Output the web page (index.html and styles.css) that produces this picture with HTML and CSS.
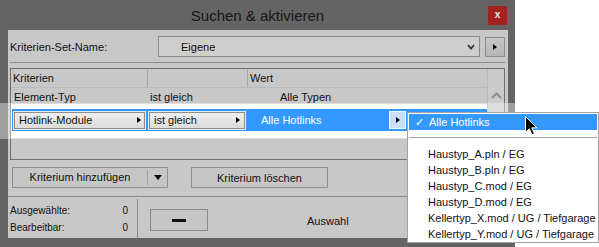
FILE: index.html
```html
<!DOCTYPE html>
<html lang="de">
<head>
	<meta charset="utf-8">
	<title>Suchen &amp; aktivieren</title>
	<link rel="stylesheet" href="styles.css">
</head>
<body>
<div class="window">
	<div class="titlebar">
		<span></span>
		<span class="title">Suchen &amp; aktivieren</span>
		<span class="close">x</span>
	</div>
	<div class="panel">
		<div class="set-row">
			<span class="set-label">Kriterien-Set-Name:</span>
			<div class="select">
				<span>Eigene</span>
				<svg width="8" height="6" viewBox="0 0 8 6"><polyline points="1,1 4,4.5 7,1" fill="none" stroke="#333" stroke-width="1.8"/></svg>
			</div>
			<div class="arrow-btn"><i class="tri-right"></i></div>
		</div>
		<div class="rule"></div>
		<div class="table">
			<div class="table-main">
				<div class="thead">
					<span class="col1">Kriterien</span>
					<span class="col2"></span>
					<span class="col3">Wert</span>
				</div>
				<div class="trow">
					<span class="col1">Element-Typ</span>
					<span class="col2">ist gleich</span>
					<span class="col3 value">Alle Typen</span>
				</div>
				<div class="edit-row">
					<div class="edit-sel">
						<div class="combo combo-type">Hotlink-Module<i class="tri-right"></i></div>
						<div class="combo combo-op">ist gleich<i class="tri-right"></i></div>
						<span class="edit-value">Alle Hotlinks</span>
						<div class="mini-btn"><i class="tri-right"></i></div>
					</div>
				</div>
			</div>
			<div class="scroll">
				<svg width="11" height="7" viewBox="0 0 11 7"><polyline points="1,6 5.5,1.5 10,6" fill="none" stroke="#8c8c8c" stroke-width="2"/></svg>
			</div>
		</div>
		<div class="buttons">
			<div class="btn split">
				<span class="split-main">Kriterium hinzufügen</span>
				<span class="split-drop"><i class="tri-down"></i></span>
			</div>
			<div class="btn delete">Kriterium löschen</div>
		</div>
		<div class="rule full"></div>
		<div class="footer">
			<div class="stats">
				<div class="stat"><span>Ausgewählte:</span><span>0</span></div>
				<div class="stat"><span>Bearbeitbar:</span><span>0</span></div>
			</div>
			<div class="btn minus"><i></i></div>
			<span class="selection">Auswahl</span>
		</div>
	</div>
</div>

<div class="band"></div>

<div class="menu">
	<div class="menu-item active"><span class="check">✓</span>Alle Hotlinks</div>
	<div class="menu-sep"></div>
	<div class="menu-item">Haustyp_A.pln / EG</div>
	<div class="menu-item">Haustyp_B.pln / EG</div>
	<div class="menu-item">Haustyp_C.mod / EG</div>
	<div class="menu-item">Haustyp_D.mod / EG</div>
	<div class="menu-item">Kellertyp_X.mod / UG / Tiefgarage</div>
	<div class="menu-item">Kellertyp_Y.mod / UG / Tiefgarage</div>
</div>

<svg class="cursor" width="13" height="20" viewBox="0 0 13 20">
	<path d="M0.5,0.5 L0.5,16.5 L4.3,12.8 L7,18.8 L9.4,17.8 L6.8,11.8 L11.8,11.8 Z" fill="#000" stroke="#fff" stroke-width="1"/>
</svg>
</body>
</html>
```

FILE: styles.css
```css
body {
	margin: 0;
	background: #fff;
	font-family: "Liberation Sans", Arial, sans-serif;
	font-size: 11px;
	color: #111;
}

.window {
	width: 515px;
	height: 247px;
	background: #646464;
	display: flex;
	flex-direction: column;
}

.titlebar {
	height: 30px;
	display: grid;
	grid-template-columns: 1fr auto 1fr;
	align-items: start;
}

.title {
	font-size: 15px;
	line-height: 17px;
	padding-top: 7px;
	color: #161616;
}

.close {
	justify-self: end;
	width: 19px;
	height: 19px;
	margin: 6px 8px 0 0;
	background: #a3201f;
	color: #e8e8e8;
	font-size: 10px;
	font-weight: bold;
	line-height: 17px;
	text-align: center;
}

.panel {
	height: 208px;
	margin: 0 7px 9px 8px;
	padding: 6px 3px 0 2px;
	background: #c8c8c8;
	box-sizing: border-box;
}

.set-row {
	display: flex;
	align-items: center;
	height: 21px;
}

.set-label {
	width: 148px;
}

.select {
	width: 322px;
	height: 21px;
	box-sizing: border-box;
	border: 1px solid #8a8a8a;
	background: #cecece;
	display: flex;
	align-items: center;
	justify-content: space-between;
	padding: 0 4px 0 22px;
}

.arrow-btn {
	width: 20px;
	height: 20px;
	margin-left: 5px;
	box-sizing: border-box;
	border: 1px solid #8c8c8c;
	background: linear-gradient(#c6c6c6, #b6b6b6);
	display: flex;
	align-items: center;
	justify-content: center;
}

.tri-right {
	display: block;
	width: 0;
	height: 0;
	border-left: 4px solid #000;
	border-top: 3.5px solid transparent;
	border-bottom: 3.5px solid transparent;
}

.tri-down {
	display: block;
	width: 0;
	height: 0;
	border-top: 5px solid #000;
	border-left: 4.5px solid transparent;
	border-right: 4.5px solid transparent;
}

.rule {
	height: 1px;
	margin-top: 5px;
	background: #8a8a8a;
}

.table {
	display: flex;
	height: 92px;
	margin-top: 5px;
	box-sizing: border-box;
	border: 1px solid #707070;
}

.table-main {
	flex: 1;
}

.thead,
.trow {
	display: flex;
}

.thead {
	height: 18px;
	line-height: 18px;
	border-bottom: 1px solid #b4bcc4;
}

.thead .col1,
.thead .col2 {
	border-right: 1px solid #a8a8a8;
}

.col1 {
	width: 137px;
	padding-left: 2px;
	box-sizing: border-box;
}

.col2 {
	width: 100px;
	padding-left: 2px;
	box-sizing: border-box;
}

.col3 {
	padding-left: 2px;
}

.trow {
	height: 16px;
	line-height: 16px;
	padding-top: 1px;
	box-sizing: border-box;
}

.trow .col1 {
	padding-left: 3px;
}

.trow .value {
	padding-left: 32px;
}

.edit-row {
	height: 34px;
	padding: 5px 0 0 1px;
	box-sizing: border-box;
	background: #fff;
}

.edit-sel {
	position: relative;
	z-index: 2;
	height: 22px;
	padding-left: 2px;
	background: #3399ff;
	display: flex;
	align-items: center;
}

.combo {
	height: 17px;
	box-sizing: border-box;
	border: 1px solid #8e8e8e;
	box-shadow: 0 0 0 1px #e2ebf5;
	background: linear-gradient(#eeeeee, #dcdcdc);
	display: flex;
	align-items: center;
	justify-content: space-between;
	padding: 0 3px 0 4px;
}

.combo-type {
	width: 131px;
}

.combo-op {
	width: 96px;
	margin-left: 4px;
	padding-right: 4px;
}

.edit-value {
	width: 128px;
	margin-left: 16px;
	color: #fff;
}

.mini-btn {
	width: 17px;
	height: 18px;
	box-sizing: border-box;
	border: 1px solid #eef5fc;
	background: #c9e0f6;
	display: flex;
	align-items: center;
	justify-content: center;
}

.scroll {
	width: 17px;
	border-left: 1px solid #b8b8b8;
	background: #cbcbcb;
	display: flex;
	justify-content: center;
	align-items: flex-start;
	padding-top: 23px;
	box-sizing: border-box;
}

.buttons {
	display: flex;
	margin-top: 7px;
	padding-left: 2px;
}

.btn {
	height: 21px;
	box-sizing: border-box;
	border: 1px solid #8e8e8e;
	background: #c6c6c6;
	display: flex;
	align-items: center;
	justify-content: center;
}

.split {
	width: 156px;
	justify-content: flex-start;
}

.split-main {
	width: 134px;
	height: 100%;
	line-height: 19px;
	text-align: center;
}

.split-drop {
	flex: 1;
	height: 15px;
	border-left: 1px solid #a2a2a2;
	display: flex;
	align-items: center;
	justify-content: center;
}

.delete {
	width: 137px;
	margin-left: 23px;
}

.rule.full {
	margin: 8px -3px 0 -2px;
}

.footer {
	display: flex;
	align-items: flex-start;
	height: 41px;
}

.stats {
	width: 128px;
	height: 39px;
	margin-top: 2px;
	padding: 3px 9px 0 0;
	box-sizing: border-box;
	border-right: 1px solid #8a8a8a;
	font-size: 10px;
	line-height: 17px;
}

.stat {
	display: flex;
	justify-content: space-between;
}

.minus {
	width: 58px;
	height: 22px;
	margin: 12px 0 0 12px;
	border-color: #8a8a8a;
}

.minus i {
	display: block;
	width: 14px;
	height: 3px;
	background: #111;
}

.selection {
	margin: 18px 0 0 99px;
	line-height: 13px;
}

.band {
	position: absolute;
	left: 0;
	top: 103px;
	width: 515px;
	height: 36px;
	background: rgba(255, 255, 255, 0.38);
	z-index: 1;
}

.menu {
	position: absolute;
	left: 407px;
	top: 112px;
	width: 192px;
	height: 131px;
	box-sizing: border-box;
	border: 1px solid #a3a3a3;
	padding: 1px;
	background: #fff;
	z-index: 3;
}

.menu-item {
	height: 16px;
	line-height: 16px;
	padding-left: 19px;
	white-space: nowrap;
}

.menu-item.active {
	background: #3399ff;
	color: #fff;
	padding-left: 6px;
}

.check {
	display: inline-block;
	width: 14px;
	font-family: "DejaVu Sans", sans-serif;
	font-size: 11px;
}

.menu-sep {
	height: 1px;
	margin: 7px 0 8px;
	background: #a0a0a0;
}

.cursor {
	position: absolute;
	left: 525px;
	top: 116px;
	z-index: 4;
}
```
